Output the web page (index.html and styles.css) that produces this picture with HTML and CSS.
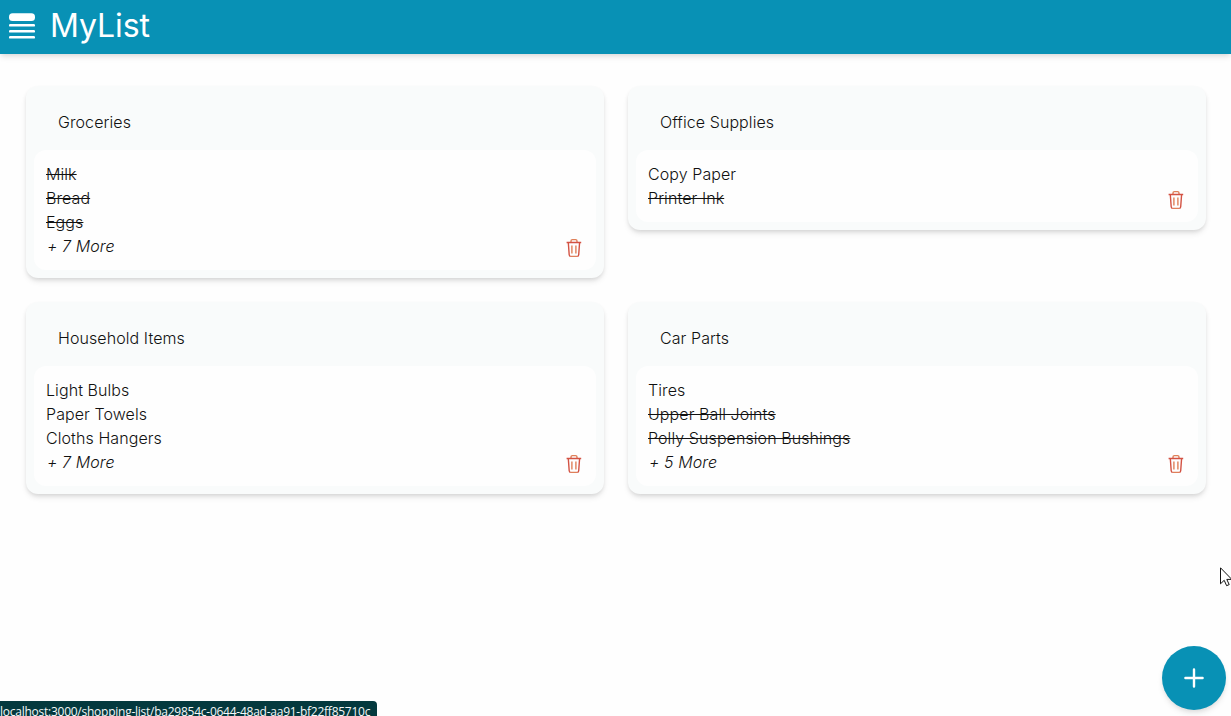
FILE: index.html
```html
<!DOCTYPE html>
<html lang="en">
<head>
<meta charset="utf-8">
<title>MyList</title>
<link rel="stylesheet" href="styles.css">
</head>
<body>
<svg class="symbols" aria-hidden="true">
  <symbol id="trash" viewBox="0 0 16 20">
    <path class="trash-accent" d="M5 4.2V3q0-1.4 1.4-1.4h3.2Q11 1.6 11 3v1.2M5.9 7.5v8M9.9 7.5v8M4.6 18.4h6.6"/>
    <path d="M.6 4.5h14.6M2.3 4.5l.9 12.3q.1 1.6 1.5 1.6M13.6 4.5l-.9 12.3q-.1 1.6-1.5 1.6"/>
  </symbol>
</svg>
<header class="topbar">
  <svg class="logo" viewBox="0 0 26 26">
    <rect y=".3" width="26" height="7.8" rx="3.6"/>
    <rect y="11" width="26" height="2.6" rx="1.2"/>
    <rect y="17" width="26" height="2.6" rx="1.2"/>
    <rect y="23" width="26" height="2.6" rx="1.2"/>
  </svg>
  <h1 class="brand">MyList</h1>
</header>
<main class="lists">
  <section class="card">
    <h2 class="card-title">Groceries</h2>
    <div class="card-body">
      <ul class="items">
        <li><s>Milk</s></li>
        <li><s>Bread</s></li>
        <li><s>Eggs</s></li>
        <li class="more">+ 7 More</li>
      </ul>
      <svg class="trash"><use href="#trash"/></svg>
    </div>
  </section>
  <section class="card">
    <h2 class="card-title">Office Supplies</h2>
    <div class="card-body">
      <ul class="items">
        <li>Copy Paper</li>
        <li><s>Printer Ink</s></li>
      </ul>
      <svg class="trash"><use href="#trash"/></svg>
    </div>
  </section>
  <section class="card">
    <h2 class="card-title">Household Items</h2>
    <div class="card-body">
      <ul class="items">
        <li>Light Bulbs</li>
        <li>Paper Towels</li>
        <li>Cloths Hangers</li>
        <li class="more">+ 7 More</li>
      </ul>
      <svg class="trash"><use href="#trash"/></svg>
    </div>
  </section>
  <section class="card">
    <h2 class="card-title">Car Parts</h2>
    <div class="card-body">
      <ul class="items">
        <li>Tires</li>
        <li><s>Upper Ball Joints</s></li>
        <li><s>Polly Suspension Bushings</s></li>
        <li class="more">+ 5 More</li>
      </ul>
      <svg class="trash"><use href="#trash"/></svg>
    </div>
  </section>
</main>
<button class="add" aria-label="Add list">
  <svg class="plus" viewBox="0 0 20 20"><path d="M10 1.4v17.2M1.4 10h17.2"/></svg>
</button>
<svg class="cursor" viewBox="0 0 13 20"><path d="M.5.8v16l3.7-3.5 2.4 5.4 2.6-1.1-2.4-5.2h5z"/></svg>
<div class="status">localhost:3000/shopping-list/ba29854c-0644-48ad-aa91-bf22ff85710c</div>
</body>
</html>
```

FILE: styles.css
```css
* { box-sizing: border-box; }

body {
  margin: 0;
  height: 716px;
  overflow: hidden;
  background: #fefefe;
  color: #111;
  font: 300 16px/24px Inter, sans-serif;
  letter-spacing: .08px;
}

.symbols { position: absolute; width: 0; height: 0; }

.topbar {
  display: flex;
  align-items: center;
  gap: 15px;
  height: 54px;
  padding: 0 9px 2px;
  background: #0891b5;
  color: #fff;
  box-shadow: 0 4px 6px -1px rgba(0, 0, 0, .1), 0 2px 4px -1px rgba(0, 0, 0, .06);
}

.logo { width: 26px; height: 26px; fill: #fff; }

.brand {
  margin: 0;
  font-size: 32px;
  line-height: 48px;
  font-weight: 400;
  letter-spacing: -.1px;
}

.lists {
  display: grid;
  grid-template-columns: 578px 578px;
  gap: 24px;
  align-items: start;
  padding: 32px 25px 0 26px;
}

.card {
  padding: 0 8px 8px;
  border-radius: 12px;
  background: #f9fbfb;
  box-shadow: 0 4px 6px -1px rgba(0, 0, 0, .1), 0 2px 4px -1px rgba(0, 0, 0, .1);
}

.card-title {
  margin: 0;
  padding: 24px 24px 16px;
  font-size: 16px;
  line-height: 24px;
  font-weight: 300;
}

.card-body {
  display: flex;
  align-items: flex-end;
  justify-content: space-between;
  padding: 12px;
  border-radius: 12px;
  background: #fefefe;
}

.items { margin: 0; padding: 0; list-style: none; }

.more { padding-left: 1px; font-style: italic; }

.trash {
  width: 16px;
  height: 20px;
  margin-right: 2px;
  fill: none;
  stroke: #d35243;
  stroke-width: 1.4;
}

.trash-accent { stroke: #df8059; }

.add {
  position: absolute;
  left: 1162px;
  top: 646px;
  display: grid;
  place-items: center;
  width: 64px;
  height: 64px;
  padding: 0;
  border: 0;
  border-radius: 50%;
  background: #0891b5;
  box-shadow: 0 4px 6px -1px rgba(0, 0, 0, .1), 0 2px 4px -1px rgba(0, 0, 0, .06);
}

.plus { width: 20px; height: 20px; fill: none; stroke: #fff; stroke-width: 2.4; stroke-linecap: round; }

.cursor {
  position: absolute;
  left: 1220px;
  top: 567px;
  width: 13px;
  height: 20px;
  fill: #fff;
  stroke: #111;
}

.status {
  position: absolute;
  left: 0;
  top: 701px;
  width: 377px;
  height: 15px;
  border-top-right-radius: 4px;
  background: #04393e;
  color: #f4f8f8;
  font: 400 12px/22px "Open Sans", "Noto Sans", sans-serif;
  letter-spacing: -.25px;
  white-space: nowrap;
}
```
